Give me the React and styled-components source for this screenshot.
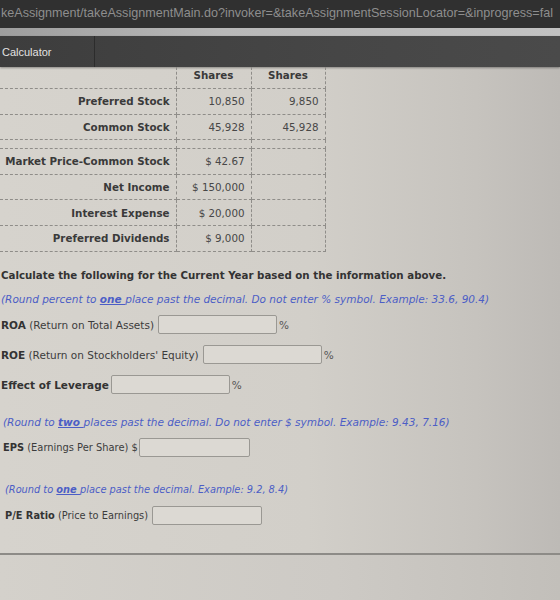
import React from "react";
import styled, { createGlobalStyle } from "styled-components";

const GlobalStyle = createGlobalStyle`
  html, body {
    margin: 0;
    padding: 0;
    background: #cfccc6;
  }
`;

const holdings = [
  { label: "Preferred Stock", current: "10,850", prior: "9,850" },
  { label: "Common Stock", current: "45,928", prior: "45,928" },
];

const figures = [
  { label: "Market Price-Common Stock", value: "$ 42.67" },
  { label: "Net Income", value: "$ 150,000" },
  { label: "Interest Expense", value: "$ 20,000" },
  { label: "Preferred Dividends", value: "$ 9,000" },
];

const App = () => {
  return (
    <Page>
      <GlobalStyle />
      <UrlBar>
        keAssignment/takeAssignmentMain.do?invoker=&amp;takeAssignmentSessionLocator=&amp;inprogress=fal
      </UrlBar>
      <Strip />
      <ToolBar>
        <ToolTab>Calculator</ToolTab>
      </ToolBar>

      <DataTable>
        <colgroup>
          <Col $w={176} />
          <Col $w={75} />
          <Col $w={74} />
        </colgroup>
        <tbody>
          <tr>
            <HeadLabel />
            <HeadCell>Shares</HeadCell>
            <HeadCell>Shares</HeadCell>
          </tr>
          {holdings.map(row => (
            <tr key={row.label}>
              <LabelCell>{row.label}</LabelCell>
              <ValueCell>{row.current}</ValueCell>
              <ValueCell>{row.prior}</ValueCell>
            </tr>
          ))}
          <tr>
            <SpacerCell />
            <SpacerCell />
            <SpacerCell />
          </tr>
          {figures.map(row => (
            <tr key={row.label}>
              <LabelCell>{row.label}</LabelCell>
              <ValueCell>{row.value}</ValueCell>
              <ValueCell />
            </tr>
          ))}
        </tbody>
      </DataTable>

      <Form>
        <Heading>
          Calculate the following for the Current Year based on the information above.
        </Heading>

        <Section $top={10}>
          <Note>
            (Round percent to <Em>one </Em>place past the decimal. Do not enter % symbol. Example: 33.6, 90.4)
          </Note>
          <Field>
            <b>ROA</b>&nbsp;(Return on Total Assets)
            <Answer $width={117} />
            <Unit>%</Unit>
          </Field>
          <Field>
            <b>ROE</b>&nbsp;(Return on Stockholders' Equity)
            <Answer $width={117} />
            <Unit>%</Unit>
          </Field>
          <Field>
            <b>Effect of Leverage</b>
            <Answer $width={117} $gap={2} />
            <Unit>%</Unit>
          </Field>
        </Section>

        <Section $top={20} $indent={2}>
          <Note>
            (Round to <Em>two </Em>places past the decimal. Do not enter $ symbol. Example: 9.43, 7.16)
          </Note>
          <Field $size={9.9}>
            <b>EPS</b>&nbsp;(Earnings Per Share) $
            <Answer $width={109} $gap={1} />
          </Field>
        </Section>

        <Section $top={25} $indent={4} $size={9.8}>
          <Note>
            (Round to <Em>one </Em>place past the decimal. Example: 9.2, 8.4)
          </Note>
          <Field>
            <b>P/E Ratio</b>&nbsp;(Price to Earnings)
            <Answer $width={108} />
          </Field>
        </Section>
      </Form>

      <Footer />
    </Page>
  );
};

const Page = styled.div`
  min-height: 600px;
  overflow: hidden;
  background: linear-gradient(90deg, #d6d3cd 0%, #d2cfc9 55%, #c6c3be 85%, #bdbab6 100%);
  font-family: "DejaVu Sans", Verdana, sans-serif;
  color: #3a3a3a;
`;

const UrlBar = styled.div`
  height: 28px;
  line-height: 26px;
  padding-left: 1px;
  background: #303030;
  color: #8e8e8e;
  font-family: "Liberation Sans", Arial, sans-serif;
  font-size: 12.6px;
  white-space: nowrap;
  overflow: hidden;
`;

const Strip = styled.div`
  height: 8px;
  background: linear-gradient(90deg, #9e9e9e, #b9b9b9 40%, #c2c2c2);
`;

const ToolBar = styled.div`
  height: 31px;
  display: flex;
  background: linear-gradient(90deg, #3d3d3d, #464646 60%, #4a4a4a);
  box-shadow: 0 1px 2px rgba(0, 0, 0, 0.35);
`;

const ToolTab = styled.div`
  width: 92px;
  display: flex;
  align-items: center;
  padding-left: 2px;
  border-right: 1px solid #2c2c2c;
  color: #e2e2e2;
  font-family: "Liberation Sans", Arial, sans-serif;
  font-size: 11px;
`;

const DataTable = styled.table`
  border-collapse: collapse;
  table-layout: fixed;
  font-size: 10.3px;
`;

const Col = styled.col`
  width: ${p => p.$w}px;
`;

const cellBorder = `1px dashed #8f8d89`;

const HeadLabel = styled.td`
  height: 21px;
  padding: 0;
  border-right: ${cellBorder};
  border-bottom: ${cellBorder};
`;

const HeadCell = styled.td`
  text-align: center;
  font-weight: bold;
  vertical-align: top;
  padding: 2px 0 0;
  border-right: ${cellBorder};
  border-bottom: ${cellBorder};
`;

const LabelCell = styled.td`
  height: 24.6px;
  padding: 0 6px 0 0;
  text-align: right;
  font-weight: bold;
  border-right: ${cellBorder};
  border-bottom: ${cellBorder};
  white-space: nowrap;
`;

const ValueCell = styled.td`
  padding: 0 6px 0 0;
  text-align: right;
  color: #474747;
  border-right: ${cellBorder};
  border-bottom: ${cellBorder};
`;

const SpacerCell = styled.td`
  height: 8px;
  padding: 0;
  border-right: ${cellBorder};
  border-bottom: ${cellBorder};
`;

const Form = styled.div`
  padding: 16px 0 0 1px;
  font-size: 10.5px;
`;

const Heading = styled.div`
  line-height: 14px;
  font-size: 10.25px;
  font-weight: bold;
  color: #333;
`;

const Section = styled.div`
  margin-top: ${p => p.$top}px;
  padding-left: ${p => p.$indent || 0}px;
  display: flex;
  flex-direction: column;
  gap: 10px;
  ${p => p.$size && `font-size: ${p.$size}px;`}
`;

const Note = styled.div`
  line-height: 14px;
  font-style: italic;
  color: #4c5ec6;
  margin-bottom: -1px;
`;

const Em = styled.span`
  font-weight: bold;
  text-decoration: underline;
`;

const Field = styled.div`
  height: 20px;
  display: flex;
  align-items: center;
  white-space: nowrap;
  color: #3c3c3c;
  ${p => p.$size && `font-size: ${p.$size}px;`}

  b {
    color: #333;
  }
`;

const Answer = styled.span`
  display: inline-block;
  width: ${p => p.$width}px;
  height: 17px;
  margin-left: ${p => (p.$gap === undefined ? 4 : p.$gap)}px;
  border: 1px solid #9a9893;
  border-radius: 2px;
  background: #dcd9d3;
`;

const Unit = styled.span`
  margin-left: 2px;
  color: #555;
`;

const Footer = styled.div`
  margin-top: 27px;
  height: 48px;
  border-top: 2px solid #8d8b87;
  background: linear-gradient(90deg, #d4d1cb, #cdcac5 60%, #c2bfba);
`;

export default App;
